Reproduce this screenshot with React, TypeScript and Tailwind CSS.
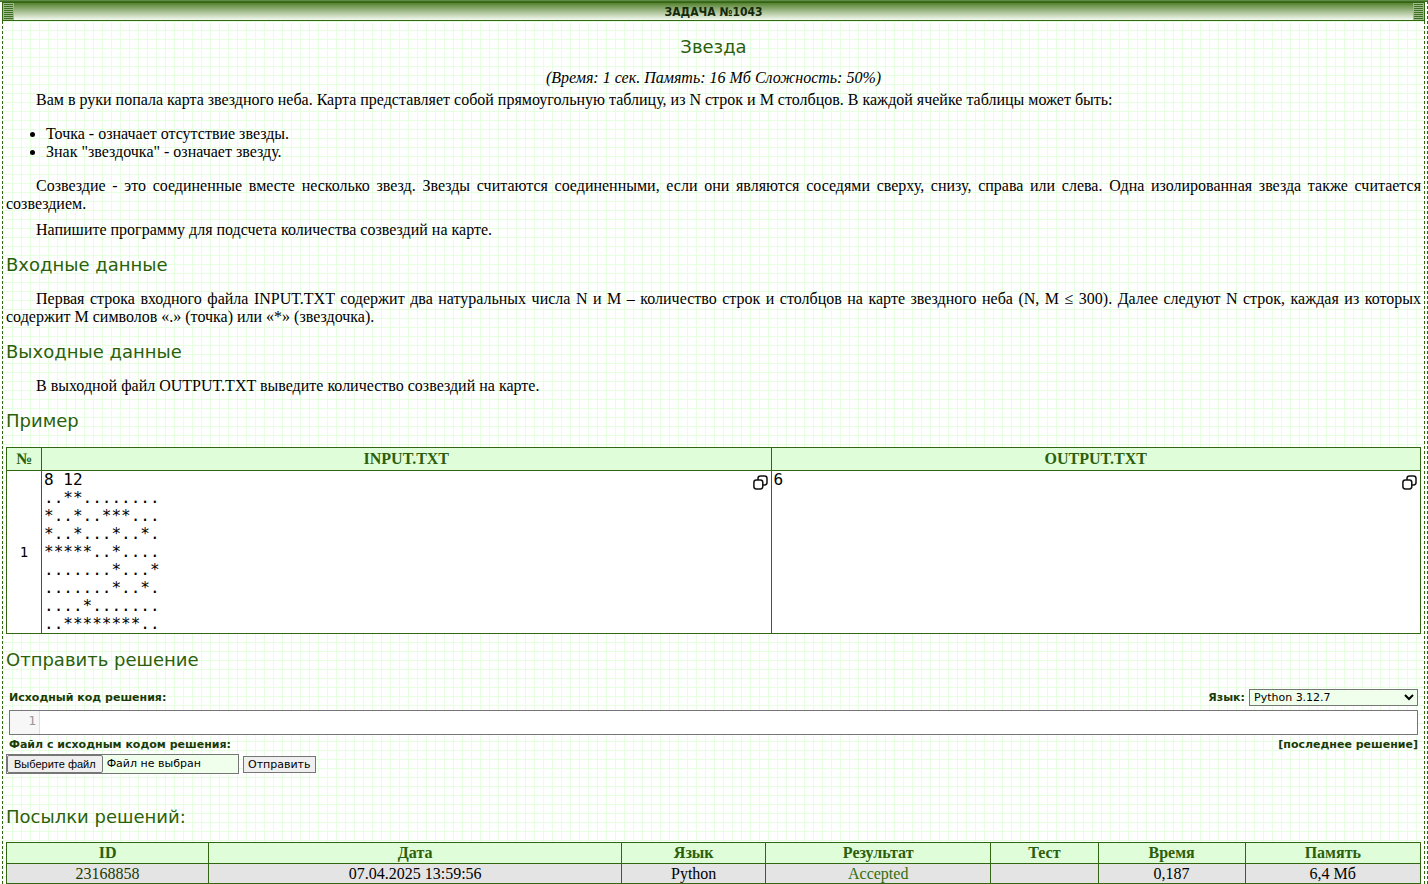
import type { ReactNode } from "react";

const sampleInput = `8 12
..**........
*..*..***...
*..*...*..*.
*****..*....
.......*...*
.......*..*.
....*.......
..********..`;

const submissionColumns = [
  { title: "ID", width: "w-[14.3%]" },
  { title: "Дата", width: "w-[29.2%]" },
  { title: "Язык", width: "w-[10.2%]" },
  { title: "Результат", width: "w-[15.9%]" },
  { title: "Тест", width: "w-[7.6%]" },
  { title: "Время", width: "w-[10.4%]" },
  { title: "Память", width: "w-[12.4%]" },
];

const cell = "border border-[#336611]";
const sans = "font-['DejaVu_Sans',sans-serif]";

function Heading({ children }: { children: ReactNode }) {
  return (
    <h2 className="mt-[14px] mb-[13px] font-['DejaVu_Sans',sans-serif] text-[18px] leading-6 text-[#2c5f0c]">
      {children}
    </h2>
  );
}

function Paragraph({ children }: { children: ReactNode }) {
  return <p className="indent-[30px] text-justify">{children}</p>;
}

function CopyButton({ label }: { label: string }) {
  return (
    <button type="button" aria-label={label} className="mt-1 mr-[3px] shrink-0">
      <svg width="15" height="15" viewBox="0 0 15 15" fill="none" stroke="#111" strokeWidth="1.5">
        <rect x="0.9" y="5" width="8.9" height="8.9" rx="2.4" />
        <path d="M5 5V3.4Q5 1 7.4 1H11.6Q14 1 14 3.4V7.6Q14 10 11.6 10H9.8" />
      </svg>
    </button>
  );
}

function Stripes() {
  return (
    <div className="w-[11px] self-stretch border-x border-[#9dbb8a] bg-[#9dbb8a] bg-[repeating-linear-gradient(to_bottom,#9dbb8a_0_1px,#3f6f22_1px_2px)]" />
  );
}

export default function App() {
  return (
    <div className="border-t border-[#5e8c45] bg-white">
      <div className="border-t border-r border-t-[#3d6b20] border-r-[#336611] pr-[2px] pl-[2px] [border-right-style:dashed]">
        <div className="flex min-h-[882px] flex-col font-['Liberation_Serif',serif] text-[16px] leading-[18px] text-black">
          <header className="flex h-[19px] items-center border border-[#336611] bg-[linear-gradient(to_bottom,#568230,#f4f9f0)]">
            <Stripes />
            <h1 className="flex-1 text-center font-['DejaVu_Sans_Condensed','DejaVu_Sans',sans-serif] text-[12px] leading-4 font-bold text-[#14280a]">
              ЗАДАЧА №1043
            </h1>
            <Stripes />
          </header>

          <main className="flex-1 border-x border-dashed border-[#336611] bg-[linear-gradient(to_right,#e6ffe0_1px,transparent_1px),linear-gradient(to_bottom,#e6ffe0_1px,transparent_1px)] bg-[size:9px_9px] px-[3px] [background-position:0_0]">
            <div className="text-center">
              <h2 className={`${sans} pt-[14px] text-[18px] leading-6 text-[#2c5f0c]`}>Звезда</h2>
              <p className="mt-[10px] italic">(Время: 1 сек. Память: 16 Мб Сложность: 50%)</p>
            </div>

            <div className="mt-1">
              <Paragraph>
                Вам в руки попала карта звездного неба. Карта представляет собой прямоугольную таблицу, из N строк и M
                столбцов. В каждой ячейке таблицы может быть:
              </Paragraph>
              <ul className="my-4 list-disc pl-10">
                <li>Точка - означает отсутствие звезды.</li>
                <li>Знак "звездочка" - означает звезду.</li>
              </ul>
              <Paragraph>
                Созвездие - это соединенные вместе несколько звезд. Звезды считаются соединенными, если они являются
                соседями сверху, снизу, справа или слева. Одна изолированная звезда также считается созвездием.
              </Paragraph>
              <div className="mt-2">
                <Paragraph>Напишите программу для подсчета количества созвездий на карте.</Paragraph>
              </div>
            </div>

            <Heading>Входные данные</Heading>
            <Paragraph>
              Первая строка входного файла INPUT.TXT содержит два натуральных числа N и M – количество строк и столбцов
              на карте звездного неба (N, M ≤ 300). Далее следуют N строк, каждая из которых содержит M символов «.»
              (точка) или «*» (звездочка).
            </Paragraph>

            <Heading>Выходные данные</Heading>
            <Paragraph>В выходной файл OUTPUT.TXT выведите количество созвездий на карте.</Paragraph>

            <Heading>Пример</Heading>
            <table className="mt-[14px] w-full table-fixed border-collapse bg-white">
              <thead>
                <tr className="h-[23px] bg-[#e0fdd9] text-[#2c5f0c]">
                  <th className={`${cell} w-[35px]`}>№</th>
                  <th className={`${cell} w-[51.6%]`}>INPUT.TXT</th>
                  <th className={cell}>OUTPUT.TXT</th>
                </tr>
              </thead>
              <tbody className="font-['DejaVu_Sans_Mono',monospace]">
                <tr>
                  <td className={`${cell} text-center text-[14px]`}>1</td>
                  <td className={`${cell} align-top`}>
                    <div className="flex items-start justify-between pl-[2px]">
                      <pre className="font-['DejaVu_Sans_Mono',monospace]">{sampleInput}</pre>
                      <CopyButton label="Копировать входные данные" />
                    </div>
                  </td>
                  <td className={`${cell} align-top`}>
                    <div className="flex items-start justify-between pl-[2px]">
                      <pre className="font-['DejaVu_Sans_Mono',monospace]">6</pre>
                      <CopyButton label="Копировать выходные данные" />
                    </div>
                  </td>
                </tr>
              </tbody>
            </table>

            <Heading>Отправить решение</Heading>
            <form className={`${sans} pt-1 text-[11px] leading-4`} onSubmit={(e) => e.preventDefault()}>
              <div className="px-[3px]">
                <div className="flex items-center justify-between font-bold text-[#1a3a05]">
                  <label htmlFor="source">Исходный код решения:</label>
                  <div className="flex items-center gap-1">
                    <label htmlFor="language">Язык:</label>
                    <select
                      id="language"
                      className="h-[17px] w-[169px] border border-[#767676] bg-[#f0ffec] font-normal text-black"
                    >
                      <option>Python 3.12.7</option>
                    </select>
                  </div>
                </div>
                <div className="mt-1 flex h-[25px] border border-[#767676] bg-white font-['DejaVu_Sans_Mono',monospace] text-[13px]">
                  <div className="w-[30px] border-r border-[#dddddd] bg-[#f7f7f7] pt-[2px] pr-[3px] text-right text-[#999999]">
                    1
                  </div>
                  <textarea id="source" rows={1} className="flex-1 resize-none px-1 pt-[2px] outline-none" />
                </div>
                <div className="mt-[2px] flex items-center justify-between font-bold text-[#1a3a05]">
                  <label htmlFor="file">Файл с исходным кодом решения:</label>
                  <span>
                    [<a href="#last">последнее решение</a>]
                  </span>
                </div>
              </div>
              <div className="mt-px flex items-center gap-1 text-black">
                <label className="relative flex h-5 w-[233px] items-center gap-1 border border-[#767676] bg-[#f0ffec]">
                  <input id="file" type="file" className="sr-only" />
                  <span className="h-[18px] rounded-[2px] border border-[#767676] bg-[#efefef] px-[6px] font-['Liberation_Sans',sans-serif]">
                    Выберите файл
                  </span>
                  <span>Файл не выбран</span>
                </label>
                <button type="submit" className="h-[17px] border border-[#767676] bg-[#efefef] px-1 leading-[15px]">
                  Отправить
                </button>
              </div>
            </form>

            <div className="pt-[17px]">
              <Heading>Посылки решений:</Heading>
            </div>
            <table className="w-full table-fixed border-collapse text-center">
              <thead>
                <tr className="h-[21px] bg-[#e0fdd9] text-[#2c5f0c]">
                  {submissionColumns.map((c) => (
                    <th key={c.title} className={`${cell} ${c.width}`}>
                      {c.title}
                    </th>
                  ))}
                </tr>
              </thead>
              <tbody>
                <tr className="h-5 bg-[#e4e4e4]">
                  <td className={cell}>
                    <a href="#23168858" className="text-[#1a3a05]">
                      23168858
                    </a>
                  </td>
                  <td className={cell}>07.04.2025 13:59:56</td>
                  <td className={cell}>Python</td>
                  <td className={`${cell} text-[#2f7010]`}>Accepted</td>
                  <td className={cell} />
                  <td className={cell}>0,187</td>
                  <td className={cell}>6,4 Мб</td>
                </tr>
              </tbody>
            </table>
          </main>
        </div>
      </div>
    </div>
  );
}
